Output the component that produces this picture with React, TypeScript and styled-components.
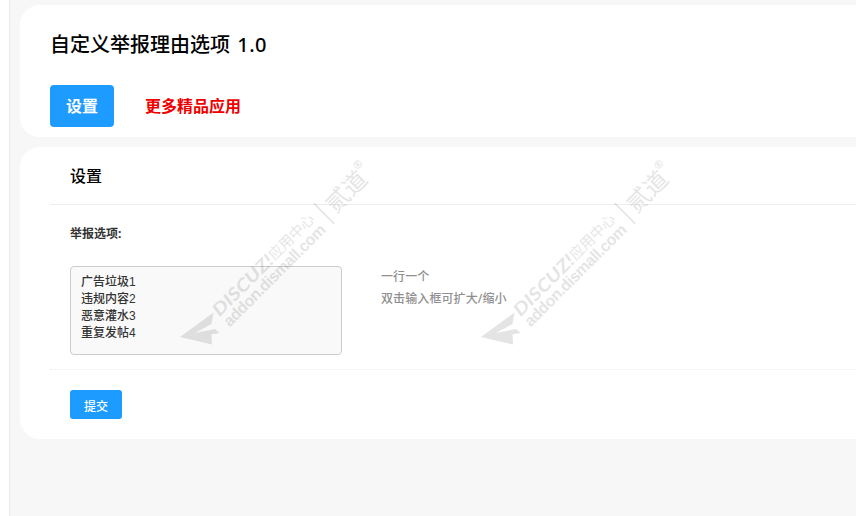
import { useState } from "react";
import styled, { createGlobalStyle } from "styled-components";

const GlobalStyle = createGlobalStyle`
  * {
    box-sizing: border-box;
  }

  body {
    margin: 0;
    overflow: hidden;
    background-color: #ffffff;
    font-family: "Noto Sans", "Noto Sans CJK SC", sans-serif;
  }

  h1, h2, p {
    margin: 0;
  }
`;

const StyledPage = styled.main`
  position: relative;
  display: flex;
  flex-direction: column;
  gap: 10px;
  height: 516px;
  margin-left: 9px;
  padding: 5px 0 0 10px;
  border-left: 1px solid #ebebeb;
  background-color: #f7f7f7;
  overflow: hidden;
`;

const StyledCard = styled.section<{ $height: number }>`
  height: ${({ $height }) => $height}px;
  padding-left: 30px;
  border-radius: 20px 0 0 20px;
  background-color: #ffffff;
`;

const StyledTitle = styled.h1`
  padding-top: 25px;
  color: #000000;
  font-size: 20px;
  font-weight: 500;
  line-height: 30px;
`;

const StyledVersion = styled.span`
  margin-left: 2px;
  letter-spacing: 0.5px;
`;

const StyledTabs = styled.nav`
  display: flex;
  gap: 31px;
  margin-top: 25px;
`;

const StyledTab = styled.a<{ $active?: boolean }>`
  width: ${({ $active }) => ($active ? "64px" : "auto")};
  border-radius: 4px;
  background-color: ${({ $active }) => ($active ? "#1e9bff" : "transparent")};
  color: ${({ $active }) => ($active ? "#ffffff" : "#ee0000")};
  font-size: 16px;
  font-weight: 700;
  line-height: 42px;
  text-align: center;
  cursor: pointer;
`;

const StyledHeading = styled.h2`
  height: 58px;
  padding-left: 20px;
  border-bottom: 1px solid #ededed;
  color: #000000;
  font-size: 16px;
  font-weight: 500;
  line-height: 59px;
`;

const StyledLabel = styled.label`
  display: block;
  padding: 19px 0 0 20px;
  color: #333333;
  font-size: 12px;
  font-weight: 700;
  line-height: 20px;
`;

const StyledField = styled.div`
  display: flex;
  gap: 39px;
  height: 126px;
  padding: 22px 0 0 20px;
  border-bottom: 1px dotted #e6ecef;
`;

const StyledTextarea = styled.textarea<{ $expanded: boolean }>`
  width: ${({ $expanded }) => ($expanded ? "420px" : "272px")};
  height: 89px;
  padding: 7px 10px;
  border: 1px solid #cccccc;
  border-radius: 4px;
  outline: none;
  background-color: #f9f9f9;
  color: #333333;
  font-family: "Liberation Sans", "Noto Sans CJK SC", sans-serif;
  font-size: 12px;
  font-weight: 500;
  line-height: 17px;
  resize: none;
`;

const StyledHint = styled.p`
  color: #8f8f8f;
  font-size: 12px;
  font-weight: 500;
  line-height: 22px;
  letter-spacing: 0.1px;
`;

const StyledSubmit = styled.button`
  display: block;
  width: 52px;
  height: 29px;
  margin: 20px 0 0 20px;
  padding: 2px 0 0;
  border: 0;
  border-radius: 3px;
  background-color: #1e9bff;
  color: #ffffff;
  font-family: inherit;
  font-size: 12px;
  font-weight: 500;
  cursor: pointer;
`;

const StyledWatermark = styled.svg<{ $left: number }>`
  position: absolute;
  top: 150px;
  left: ${({ $left }) => $left}px;
  width: 220px;
  height: 200px;
  overflow: visible;
  fill: #000000;
  opacity: 0.1;
  pointer-events: none;
`;

function Watermark({ left }: { left: number }) {
  return (
    <StyledWatermark $left={left} viewBox="0 0 220 200">
      <g transform="translate(10 187)">
        <path d="M0 0 33.5 -24.5 31.5 -13 15 -4 35 -8 39.5 -4 31.5 -2.8 32 7.5Z" />
        <g transform="rotate(-45)">
          <text x="42" y="14" fontFamily="Lato" fontSize="17.5" fontWeight="700" fontStyle="italic" textLength="78" lengthAdjust="spacingAndGlyphs">
            DISCUZ!
          </text>
          <text x="120.5" y="13" fontFamily="Noto Sans CJK SC" fontSize="14.5" fontWeight="400" textLength="58">
            应用中心
          </text>
          <text x="42" y="28.5" fontFamily="Liberation Sans" fontSize="16" fontWeight="700" textLength="137">
            addon.dismall.com
          </text>
          <rect x="188.3" y="0" width="1.7" height="29" />
          <text x="197" y="23" fontFamily="Noto Sans CJK SC" fontSize="23.5" fontWeight="400" textLength="47">
            贰道
          </text>
          <text x="243" y="7.5" fontFamily="Noto Sans" fontSize="11" fontWeight="700">
            ®
          </text>
        </g>
      </g>
    </StyledWatermark>
  );
}

function App() {
  const [reasons, setReasons] = useState("广告垃圾1\n违规内容2\n恶意灌水3\n重复发帖4");
  const [expanded, setExpanded] = useState(false);

  return (
    <>
      <GlobalStyle />
      <StyledPage>
        <StyledCard $height={132}>
          <StyledTitle>
            自定义举报理由选项 <StyledVersion>1.0</StyledVersion>
          </StyledTitle>
          <StyledTabs>
            <StyledTab $active>设置</StyledTab>
            <StyledTab>更多精品应用</StyledTab>
          </StyledTabs>
        </StyledCard>
        <StyledCard $height={292}>
          <StyledHeading>设置</StyledHeading>
          <StyledLabel htmlFor="reasons">举报选项:</StyledLabel>
          <StyledField>
            <StyledTextarea
              id="reasons"
              $expanded={expanded}
              value={reasons}
              spellCheck={false}
              onChange={(e) => setReasons(e.target.value)}
              onDoubleClick={() => setExpanded(!expanded)}
            />
            <StyledHint>
              一行一个
              <br />
              双击输入框可扩大/缩小
            </StyledHint>
          </StyledField>
          <StyledSubmit type="button">提交</StyledSubmit>
        </StyledCard>
        <Watermark left={160} />
        <Watermark left={461} />
      </StyledPage>
    </>
  );
}

export default App;
